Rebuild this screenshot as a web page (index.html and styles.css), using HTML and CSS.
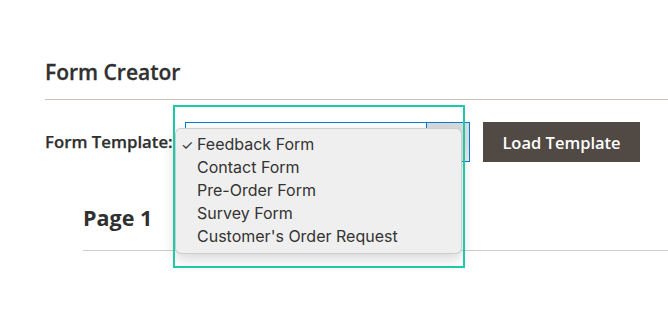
FILE: index.html
```html
<!DOCTYPE html>
<html lang="en">
<head>
<meta charset="utf-8">
<title>Form Creator</title>
<link rel="stylesheet" href="styles.css">
</head>
<body>
<div class="page">
  <h2 class="title">Form Creator</h2>
  <div class="row">
    <label class="label">Form Template:</label>
    <div class="select-wrap">
      <div class="select">
        <span class="select-arrow"></span>
      </div>
      <ul class="menu">
        <li class="item checked"><span class="check">✓</span>Feedback Form</li>
        <li class="item">Contact Form</li>
        <li class="item">Pre-Order Form</li>
        <li class="item">Survey Form</li>
        <li class="item">Customer's Order Request</li>
      </ul>
      <div class="highlight"></div>
    </div>
    <button class="btn">Load Template</button>
  </div>
  <div class="section">
    <h3 class="section-title">Page 1</h3>
  </div>
</div>
</body>
</html>
```

FILE: styles.css
```css
html, body {
  margin: 0;
  padding: 0;
  background: #ffffff;
}

.page {
  font-family: "Open Sans", "Noto Sans", sans-serif;
  color: #303030;
  width: 668px;
  height: 312px;
  overflow: hidden;
  padding-top: 58px;
  box-sizing: border-box;
}

.title {
  margin: 0 0 0 45px;
  font-size: 21px;
  line-height: 28px;
  font-weight: 600;
  padding-bottom: 13px;
  border-bottom: 1px solid #cac3b4;
  -webkit-text-stroke: 0.3px #303030;
}

.row {
  display: flex;
  align-items: center;
  margin: 22px 0 0 45px;
  height: 40px;
}

.label {
  font-size: 16.8px;
  font-weight: 600;
  line-height: 40px;
  width: 140px;
  white-space: nowrap;
  -webkit-text-stroke: 0.25px #303030;
}

.select-wrap {
  position: relative;
  width: 285px;
  height: 40px;
}

.select {
  box-sizing: border-box;
  width: 285px;
  height: 40px;
  border: 1px solid #007bdb;
  background: #ffffff;
  display: flex;
  justify-content: flex-end;
}

.select-arrow {
  width: 43px;
  height: 100%;
  border-left: 1px solid #007bdb;
  background: linear-gradient(#d9d9d9, #ececec);
  box-sizing: border-box;
}

.menu {
  position: absolute;
  left: -10px;
  top: 6px;
  width: 287px;
  box-sizing: border-box;
  margin: 0;
  padding: 4px 0 5px 0;
  list-style: none;
  background: #efefef;
  border: 0.5px solid rgba(0, 0, 0, 0.14);
  border-radius: 6px;
  box-shadow: 0 5px 14px rgba(0, 0, 0, 0.16);
  font-family: "Inter", "Liberation Sans", sans-serif;
  font-size: 16px;
  line-height: 23px;
  color: #333333;
  z-index: 2;
}

.item {
  position: relative;
  padding-left: 21px;
  white-space: nowrap;
}

.check {
  position: absolute;
  left: 5px;
  top: 0;
  font-size: 14px;
}

.highlight {
  position: absolute;
  left: -12px;
  top: -17px;
  width: 292px;
  height: 163px;
  box-sizing: border-box;
  border: 2px solid #1ec9a7;
  z-index: 3;
  pointer-events: none;
}

.btn {
  margin-left: 13px;
  height: 40px;
  width: 157px;
  padding: 0;
  border: 0;
  background: #514943;
  color: #ffffff;
  font-family: "Open Sans", "Noto Sans", sans-serif;
  font-size: 16.5px;
  font-weight: 600;
}

.section {
  margin: 41px 0 0 83px;
  padding-bottom: 17px;
  border-bottom: 1px solid #cccccc;
}

.section-title {
  margin: 0;
  font-size: 21.5px;
  line-height: 30px;
  font-weight: 700;
}
```
